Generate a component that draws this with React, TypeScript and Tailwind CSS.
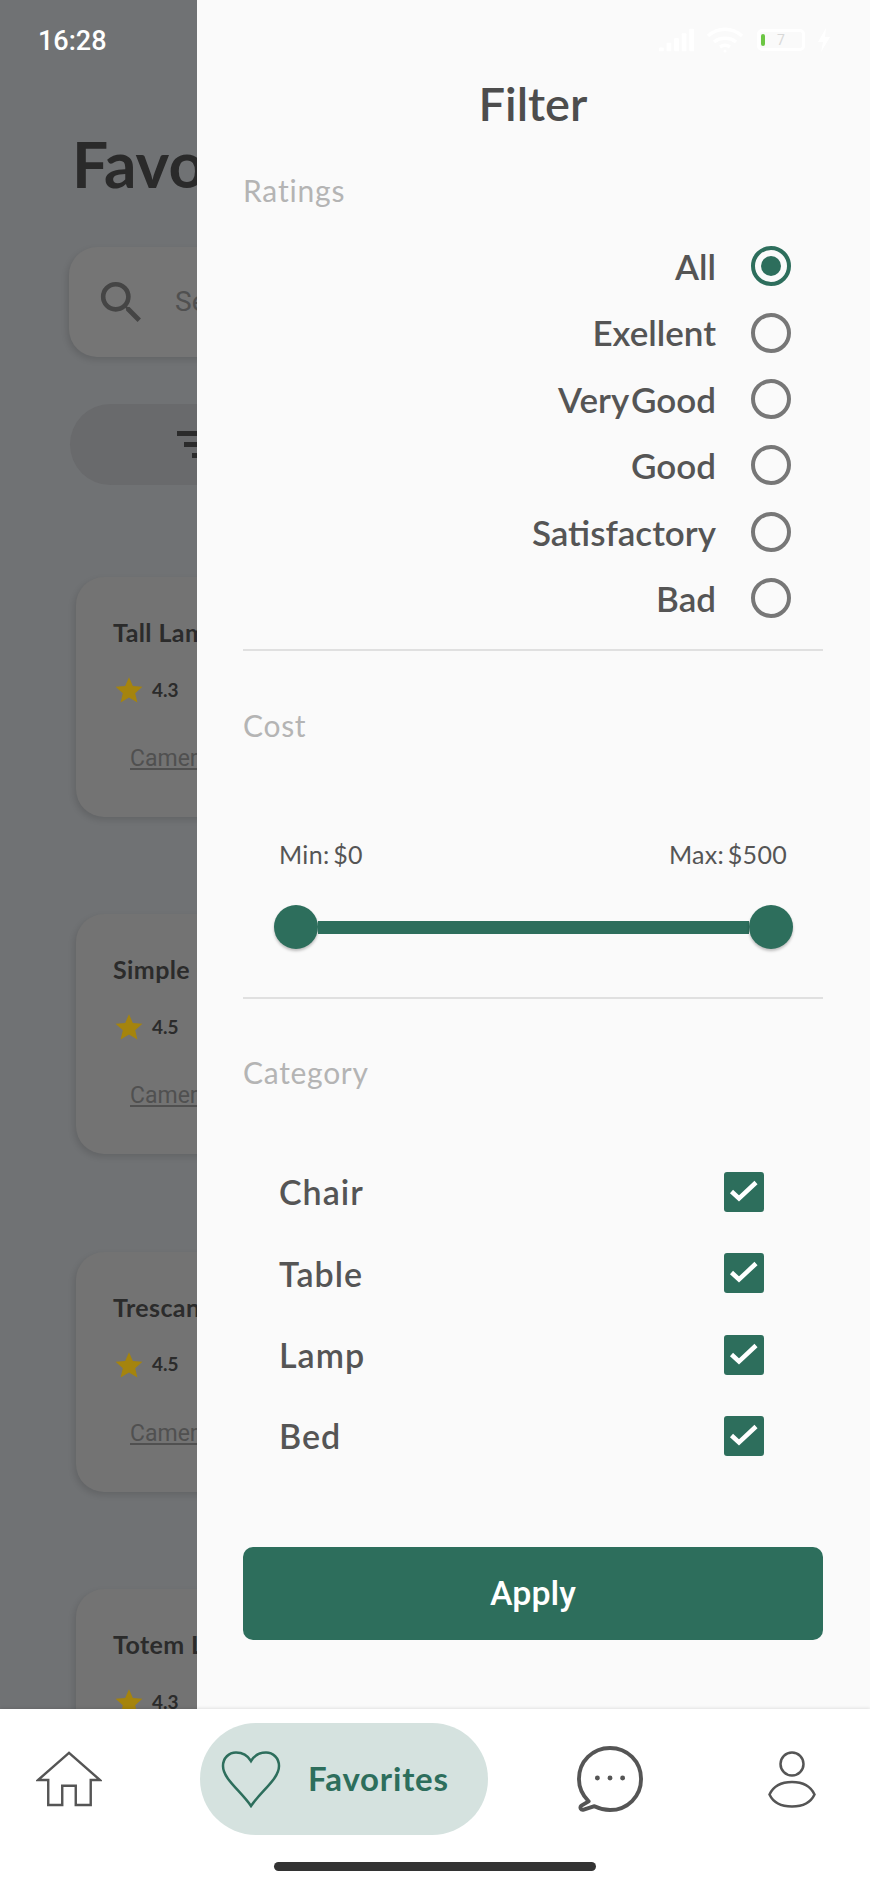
import { MdSearch } from 'react-icons/md';

const ratings = ['All', 'Exellent', 'Very Good', 'Good', 'Satisfactory', 'Bad'];
const categories = ['Chair', 'Table', 'Lamp', 'Bed'];
const products = [
  { name: 'Tall Lamp', score: '4.3' },
  { name: 'Simple Chair', score: '4.5' },
  { name: 'Trescan Table', score: '4.5' },
  { name: 'Totem Lamp', score: '4.3' },
];

const BackgroundCard = ({ name, score }: { name: string; score: string }) => (
  <div className="ml-[4px] mb-[97.3px] h-[240px] w-[700px] shrink-0 rounded-[28px] bg-[#737373] pl-[37px] pt-[39px] shadow-[-2px_3px_6px_rgba(0,0,0,0.12)]">
    <p className="font-['Lato',sans-serif] text-[25px] font-bold leading-[32px] tracking-[0.4px] text-[#2b2b2b]">{name}</p>
    <div className="mt-[28px] flex h-[28px] items-center">
      <svg width="30" height="28" viewBox="0 0 24 24" className="ml-[1px]">
        <path d="M12 1l3.300 7.600 8.200.7-6.200 5.400 1.900 8L12 18.500l-7.200 4.200 1.900-8L.5 9.300l8.200-.7z" fill="#a5840d" />
      </svg>
      <span className="ml-[8px] font-['Lato',sans-serif] text-[19px] font-bold text-[#2b2b2b]">{score}</span>
    </div>
    <p className="mt-[40px] ml-[17px] font-['Roboto',sans-serif] text-[23px] leading-[30px] text-[#505050] underline">Camera</p>
  </div>
);

const StatusIcons = () => (
  <div className="absolute right-[39px] top-[27px] flex items-center">
    <svg width="36" height="26" viewBox="0 0 38 26" fill="#ffffff">
      <rect x="0" y="21" width="5" height="4" rx="1" />
      <rect x="8" y="16" width="5" height="9" rx="1" />
      <rect x="16" y="11" width="5" height="14" rx="1" />
      <rect x="24" y="6" width="5" height="19" rx="1" />
      <rect x="32" y="1" width="5" height="24" rx="1" />
    </svg>
    <svg width="38" height="26" viewBox="0 0 38 26" fill="none" stroke="#ffffff" strokeWidth="3.5" className="ml-[11px]">
      <path d="M2 9c10-9 24-9 34 0" />
      <path d="M8 15c6-5 16-5 22 0" />
      <path d="M14 20c3-2 7-2 10 0" />
      <circle cx="19" cy="24" r="1.500" fill="#ffffff" stroke="none" />
    </svg>
    <div className="relative ml-[13px] flex h-[22px] w-[48px] items-center justify-center rounded-[5px] border-[3px] border-white">
      <div className="absolute left-[1px] top-[2px] h-[12px] w-[4px] rounded-[2px] bg-[#6cc644]" />
      <span className="font-['Roboto',sans-serif] text-[14px] leading-none text-[#d8d8d8]">7</span>
    </div>
    <svg width="14" height="24" viewBox="0 0 14 24" fill="#ffffff" className="ml-[12px]">
      <path d="M9 0L1 14h5l-2 10 9-15H8z" />
    </svg>
  </div>
);

export default function App() {
  return (
    <div className="flex h-[1884px] w-[870px] flex-col overflow-hidden bg-white">
      <div className="relative h-[1709px] shrink-0 overflow-hidden bg-[#707274]">
        <div className="pl-[72px] pt-[125px]">
          <h1 className="font-['Lato',sans-serif] text-[64px] font-bold leading-[78px] text-[#2a2a2a]">Favorites</h1>
          <div className="mt-[44px] ml-[-3px] flex h-[110px] w-[720px] items-center rounded-[28px] bg-[#757575] pl-[25px] shadow-[-2px_3px_6px_rgba(0,0,0,0.12)]">
            <MdSearch size={55} className="text-[#454545]" />
            <span className="ml-[26px] font-['Roboto',sans-serif] text-[28px] text-[#505050]">Search</span>
          </div>
          <div className="mt-[47px] ml-[-2px] flex h-[81px] w-[720px] items-center rounded-full bg-[#696a6c] pl-[107px]">
            <svg width="40" height="30" viewBox="0 0 40 30" fill="#2b2b2b">
              <rect x="0" y="1" width="40" height="5" />
              <rect x="7" y="12" width="26" height="5" />
              <rect x="15" y="23" width="10" height="5" />
            </svg>
          </div>
          <div className="mt-[92px]">
            {products.map((p) => (
              <BackgroundCard key={p.name} name={p.name} score={p.score} />
            ))}
          </div>
        </div>

        <div className="absolute inset-y-0 left-[197px] right-0 bg-[#fafafa] pl-[46px] pr-[47px] font-['Lato',sans-serif]">
          <h2 className="pt-[76px] text-center text-[47px] font-semibold leading-[54px] text-[#4d4d4d]">Filter</h2>
          <p className="mt-[43px] text-[30px] leading-[34px] tracking-[0.8px] text-[#b4b4b4]">Ratings</p>
          <div className="mt-[26px] flex flex-col">
            {ratings.map((r, i) => (
              <div key={r} className="flex h-[66.4px] items-center justify-end pr-[32px]">
                <span className="text-[35px] font-semibold [word-spacing:-6px] text-[#555555]">{r}</span>
                {i === 0 ? (
                  <span className="ml-[35px] flex h-[40px] w-[40px] items-center justify-center rounded-full border-[4px] border-[#2d6e5c]">
                    <span className="h-[20px] w-[20px] rounded-full bg-[#2d6e5c]" />
                  </span>
                ) : (
                  <span className="ml-[35px] h-[40px] w-[40px] rounded-full border-[4px] border-[#777777]" />
                )}
              </div>
            ))}
          </div>
          <div className="mt-[18px] h-[2px] bg-[#e0e0e0]" />
          <p className="mt-[57px] text-[30px] leading-[34px] tracking-[0.7px] text-[#b4b4b4]">Cost</p>
          <div className="mt-[97px] flex justify-between px-[36px] text-[25px] leading-[30px] tracking-[0.3px] [word-spacing:-3px] text-[#555555]">
            <span>Min: $0</span>
            <span>Max: $500</span>
          </div>
          <div className="mt-[36px] ml-[31px] mr-[30px] flex items-center">
            <span className="h-[44px] w-[44px] shrink-0 rounded-full bg-[#2d6e5c] shadow-[0_2px_3px_rgba(0,0,0,0.25)]" />
            <span className="h-[13px] flex-1 bg-[#2d6e5c]" />
            <span className="h-[44px] w-[44px] shrink-0 rounded-full bg-[#2d6e5c] shadow-[0_2px_3px_rgba(0,0,0,0.25)]" />
          </div>
          <div className="mt-[48px] h-[2px] bg-[#e0e0e0]" />
          <p className="mt-[56px] text-[30px] leading-[34px] tracking-[0.7px] text-[#b4b4b4]">Category</p>
          <div className="mt-[62px] flex flex-col pl-[36px] pr-[59px]">
            {categories.map((c) => (
              <div key={c} className="flex h-[81.3px] items-center justify-between">
                <span className="text-[34px] font-semibold tracking-[1px] text-[#555555]">{c}</span>
                <span className="flex h-[40px] w-[40px] items-center justify-center rounded-[3px] bg-[#2d6e5c]">
                  <svg width="40" height="40" viewBox="0 0 40 40" fill="none" stroke="#ffffff" strokeWidth="4.5">
                    <path d="M7.500 19.500 15 26.500 32 10.500" />
                  </svg>
                </span>
              </div>
            ))}
          </div>
          <button className="mt-[70px] flex h-[93px] w-full items-center justify-center rounded-[10px] bg-[#2d6e5c] font-['Roboto',sans-serif] text-[34px] font-medium text-white">
            Apply
          </button>
        </div>

        <span className="absolute left-[38px] top-[25px] font-['Roboto',sans-serif] text-[27px] font-medium leading-[32px] text-white">16:28</span>
        <StatusIcons />
      </div>

      <div className="relative flex-1 bg-white shadow-[0_-1px_3px_rgba(0,0,0,0.1)]">
        <div className="mt-[14px] flex h-[112px] items-center">
          <svg width="66" height="56" viewBox="0 0 68 58" fill="none" stroke="#555555" strokeWidth="2.5" className="ml-[36px]">
            <path d="M34 2 2 30h10.500v26H27V36h14v20h15.500V30H66z" />
          </svg>
          <div className="ml-[98px] flex h-[112px] w-[288px] items-center rounded-full bg-[#d5e2df] pl-[21px]">
            <svg width="60" height="57" viewBox="0 0 60 57" fill="none" stroke="#2d6e5c" strokeWidth="2.5">
              <path d="M30 55C20 40 2 28 2 15 2 7 8 1.500 15 1.500c7 0 12 3.500 15 8.500 3-5 8-8.500 15-8.500 7 0 13 5.500 13 13.500 0 13-18 25-28 40z" />
            </svg>
            <span className="ml-[27px] font-['Lato',sans-serif] text-[33px] font-bold tracking-[0.8px] text-[#2d6e5c]">Favorites</span>
          </div>
          <svg width="66" height="66" viewBox="0 0 68 68" fill="none" stroke="#555555" strokeWidth="4" className="ml-[89px]">
            <path d="M12 57C6 51 2 43 2 34 2 16 16 2 34 2s32 14 32 32-14 32-32 32c-6 0-11-1.500-16-4l-11 3.500c-3 .8-4.500-2-2.500-4z" strokeLinejoin="round" />
            <circle cx="21" cy="33" r="2.500" fill="#555555" stroke="none" />
            <circle cx="34" cy="33" r="2.500" fill="#555555" stroke="none" />
            <circle cx="47" cy="33" r="2.500" fill="#555555" stroke="none" />
          </svg>
          <svg width="48" height="57" viewBox="0 0 48 57" fill="none" stroke="#555555" strokeWidth="2.5" className="ml-[125px]">
            <ellipse cx="24" cy="13" rx="11.500" ry="11.500" />
            <path d="M24 31C13 31 5 36 1.500 43.500 5 51 13 55.500 24 55.500S43 51 46.500 43.500C43 36 35 31 24 31z" />
          </svg>
        </div>
        <div className="mx-auto mt-[27px] h-[9px] w-[322px] rounded-full bg-[#333333]" />
      </div>
    </div>
  );
}
